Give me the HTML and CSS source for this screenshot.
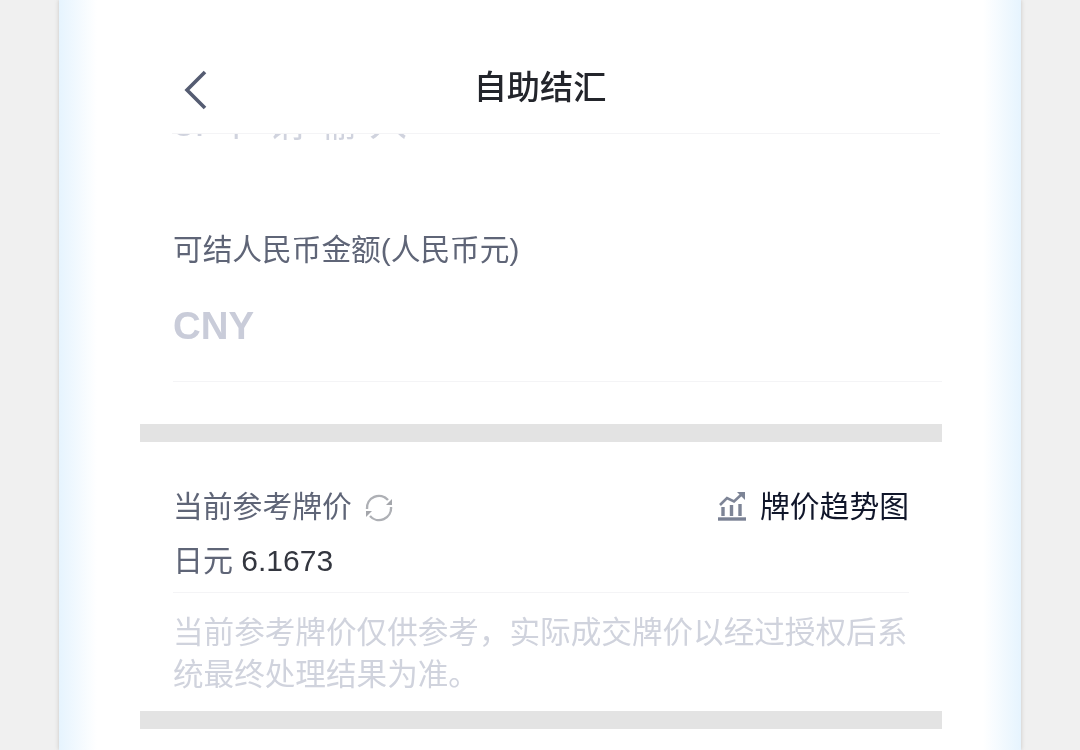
FILE: index.html
```html
<!DOCTYPE html>
<html lang="zh-CN">
<head>
	<meta charset="UTF-8">
	<title>自助结汇</title>
	<link rel="stylesheet" href="styles.css">
</head>
<body>
	<div class="phone">
		<div class="header">
			<svg class="back" viewBox="0 0 24 40" width="24" height="40"><path d="M21 2 L3 20 L21 38" fill="none" stroke="#555c72" stroke-width="3.6"/></svg>
			<div class="title">自助结汇</div>
		</div>
		<div class="content">
			<div class="clipped"><div class="clipped-text">3. 个 请 输 入</div></div>
			<div class="field">
				<div class="field-label">可结人民币金额(人民币元)</div>
				<div class="field-value">CNY</div>
			</div>
			<div class="band"></div>
			<div class="rate">
				<div class="rate-top">
					<div class="rate-label">
						<span>当前参考牌价</span>
						<svg class="refresh" viewBox="0 0 28 28" width="28" height="28">
							<path d="M2 15 A12 12 0 0 1 23 6" fill="none" stroke="#aeb0b5" stroke-width="2.4"/>
							<path d="M26 13 A12 12 0 0 1 5 22" fill="none" stroke="#aeb0b5" stroke-width="2.4"/>
							<path d="M27 5 V11 H21 Z" fill="#a4a6ab"/>
							<path d="M1 23 V17 H7 Z" fill="#a4a6ab"/>
						</svg>
					</div>
					<div class="trend">
						<svg class="trend-icon" viewBox="0 0 28 30" width="28" height="30">
							<path d="M0 27 H28" stroke="#7a8194" stroke-width="3.4"/>
							<path d="M5 24 V15 M13.5 24 V13 M22 24 V12" fill="none" stroke="#7d8496" stroke-width="3.4"/>
							<path d="M2 13 L9 6 L16 9.5 L24 2" fill="none" stroke="#7d8496" stroke-width="2.6"/>
							<path d="M19 0 H27 V8 Z" fill="#7d8496"/>
						</svg>
						<span>牌价趋势图</span>
					</div>
				</div>
				<div class="rate-value"><span class="currency">日元</span> 6.1673</div>
			</div>
			<div class="note">当前参考牌价仅供参考，实际成交牌价以经过授权后系统最终处理结果为准。</div>
			<div class="band"></div>
		</div>
	</div>
</body>
</html>
```

FILE: styles.css
```css
*{margin: 0; padding: 0; box-sizing: border-box;}
html, body{height: 100%; overflow: hidden;}
body{background: #f0f0f0; font-family: "Liberation Sans", "Noto Sans CJK SC", sans-serif;}

.phone{width: 962px; height: 750px; margin-left: 59px; background: linear-gradient(to right, #e6f4fe 0, #fff 38px, #fff 924px, #e6f4fe 100%); box-shadow: 0 0 4px rgba(120,115,105,.35); filter: blur(.7px);}

.header{position: relative; height: 134px; margin: 0 81px 0 113px; border-bottom: 1px solid #f4f4f6;}
.back{position: absolute; left: 12px; top: 70px;}
.title{padding-top: 63px; padding-right: 32px; text-align: center; font-size: 33.2px; line-height: 50px; font-weight: 500; color: #23252b;}

.content{margin: 0 79px 0 81px;}

.clipped{height: 8px; overflow: hidden; padding-left: 33px;}
.clipped-text{margin-top: -31px; font-size: 38px; line-height: 40px; color: #d0d3de; white-space: nowrap; word-spacing: 2px;}

.field{height: 282px; margin-left: 33px;}
.field-label{padding-top: 86px; font-size: 29.7px; line-height: 44px; color: #5f6577; white-space: nowrap;}
.field-value{height: 110px; padding-top: 32px; font-size: 38.4px; line-height: 44px; font-weight: bold; color: #c9ccd9; border-bottom: 1px solid #f4f4f6;}

.band{height: 18px; background: #e3e3e3;}

.rate{margin: 0 33px; height: 151px; padding-top: 43px; border-bottom: 1px solid #f4f4f6;}
.rate-top{display: flex; justify-content: space-between; align-items: center; height: 44px;}
.rate-label{display: flex; align-items: center; font-size: 29.8px; line-height: 44px; color: #5f6577;}
.refresh{margin-left: 13px; margin-top: 2px;}
.trend{display: flex; align-items: center; font-size: 29.8px; line-height: 44px; color: #10162a;}
.trend-icon{margin-right: 14px;}
.rate-value{margin-top: 10px; font-size: 30px; line-height: 44px; color: #33363f;}
.currency{color: #5f6577;}

.note{height: 118px; padding: 18px 33px 0; font-size: 30.6px; line-height: 42px; color: #d0d3dd;}
```
